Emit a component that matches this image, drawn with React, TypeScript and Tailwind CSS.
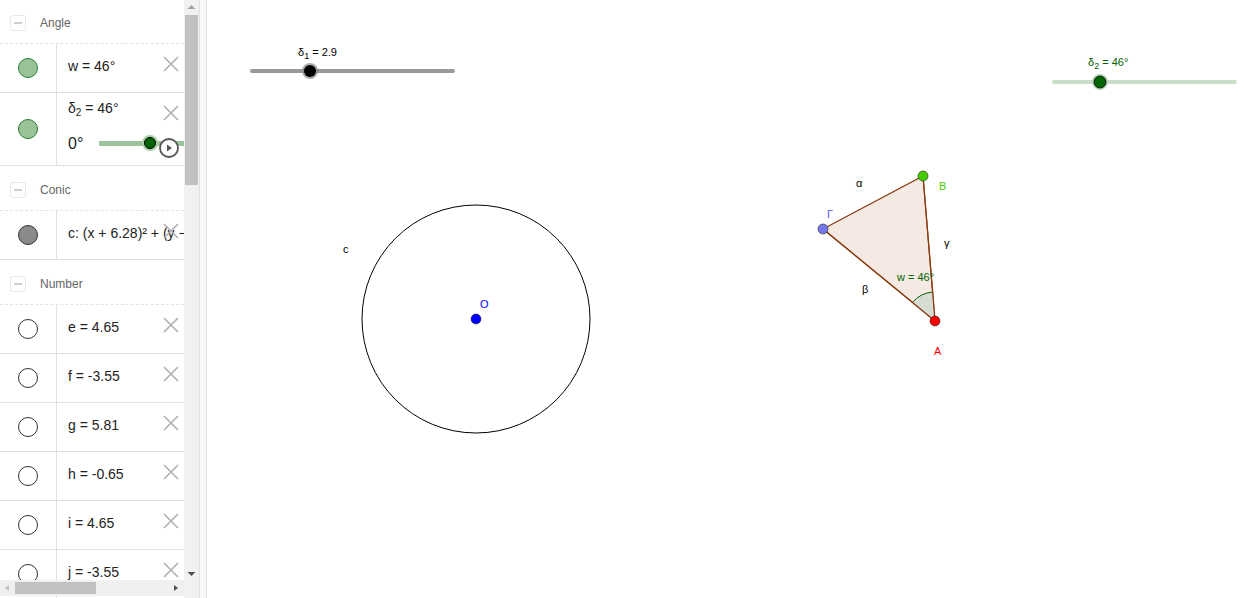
import React from "react";

const FONT = { fontFamily: '"Liberation Sans", Arial, sans-serif' };

function CloseX() {
  return (
    <svg className="absolute right-[4px] top-[11px]" width="18" height="18" viewBox="0 0 18 18">
      <path d="M2 2 L16 16 M16 2 L2 16" stroke="#b0b0b0" strokeWidth="1.6" fill="none" />
    </svg>
  );
}

function Header({ label, top }: { label: string; top?: boolean }) {
  return (
    <div className={`flex items-center border-b border-dashed border-[#e4e4e4] pt-[3px] ${top ? "h-[44px]" : "h-[45px]"}`}>
      <div className="ml-[10px] flex h-[16px] w-[16px] items-center justify-center rounded-[3px] border border-[#e8e8e8]">
        <div className="h-[2px] w-[8px] bg-[#cfcfcf]" />
      </div>
      <span className="ml-[14px] text-[12px] text-[#666]">{label}</span>
    </div>
  );
}

function Dot({ kind }: { kind: "green" | "gray" | "empty" }) {
  const cls =
    kind === "green"
      ? "bg-[#99c299] border-[#2e7d32]"
      : kind === "gray"
      ? "bg-[#8a8a8a] border-[#333]"
      : "bg-white border-[#333]";
  return <div className={`h-[20px] w-[20px] rounded-full border ${cls}`} />;
}

function Row({ dot, text, h = 49 }: { dot: "green" | "gray" | "empty"; text: React.ReactNode; h?: number }) {
  return (
    <div className="flex border-b border-[#e0e0e0]" style={{ height: h }}>
      <div className="flex w-[57px] shrink-0 items-center justify-center border-r border-[#e0e0e0]">
        <Dot kind={dot} />
      </div>
      <div className="relative flex flex-1 items-center overflow-hidden pb-[3px] pl-[11px] text-[14px] text-[#222] whitespace-nowrap">
        {text}
        <CloseX />
      </div>
    </div>
  );
}

function Panel() {
  return (
    <div className="relative h-full w-[184px] shrink-0 overflow-hidden bg-white" style={FONT}>
      <Header label="Angle" top />
      <Row dot="green" text={<span>w = 46°</span>} />
      <div className="flex h-[73px] border-b border-[#e0e0e0]">
        <div className="flex w-[57px] shrink-0 items-center justify-center border-r border-[#e0e0e0]">
          <Dot kind="green" />
        </div>
        <div className="relative flex-1 overflow-hidden text-[14px] text-[#222]">
          <div className="absolute left-[11px] top-[5px] whitespace-nowrap">
            δ<sub className="text-[10px]">2</sub> = 46°
          </div>
          <CloseX />
          <div className="absolute left-[11px] top-[39px] text-[16px]">0°</div>
          <div className="absolute left-[42px] top-[48px] h-[5px] w-[90px] bg-[#9cc49c]" />
          <div className="absolute left-[85px] top-[42px] h-[16px] w-[16px] rounded-full bg-[#a9cfa9]" />
          <div className="absolute left-[87px] top-[44px] h-[12px] w-[12px] rounded-full border border-black bg-[#006400]" />
          <svg className="absolute left-[101px] top-[44px]" width="22" height="22" viewBox="0 0 22 22">
            <circle cx="11" cy="11" r="9" fill="white" stroke="#555" strokeWidth="1.8" />
            <path d="M9 7.5 L14 11 L9 14.5 Z" fill="#555" />
          </svg>
        </div>
      </div>
      <Header label="Conic" />
      <Row dot="gray" text={<span>c: (x + 6.28)² + (y − 2.5)² = 10</span>} />
      <Header label="Number" />
      <Row dot="empty" text={<span>e = 4.65</span>} />
      <Row dot="empty" text={<span>f = -3.55</span>} />
      <Row dot="empty" text={<span>g = 5.81</span>} />
      <Row dot="empty" text={<span>h = -0.65</span>} />
      <Row dot="empty" text={<span>i = 4.65</span>} />
      <Row dot="empty" text={<span>j = -3.55</span>} />
      <div className="absolute bottom-[2px] left-0 flex h-[16px] w-[184px] items-center bg-[#f0f0f0]">
        <svg width="15" height="16" viewBox="0 0 15 16">
          <path d="M9 5 L5 8 L9 11 Z" fill="#c0c0c0" />
        </svg>
        <div className="h-[12px] w-[81px] bg-[#c1c1c1]" />
        <div className="flex-1" />
        <svg width="15" height="16" viewBox="0 0 15 16">
          <path d="M5 5 L9 8 L5 11 Z" fill="#505050" />
        </svg>
      </div>
    </div>
  );
}

function VScroll() {
  return (
    <div className="flex h-full w-[15px] shrink-0 flex-col bg-[#f1f1f1]">
      <svg width="15" height="15" viewBox="0 0 15 15">
        <path d="M3.5 9 L7.5 5 L11.5 9 Z" fill="#a3a3a3" />
      </svg>
      <div className="mx-[1px] h-[170px] bg-[#c1c1c1]" />
      <div className="flex-1" />
      <svg width="15" height="15" viewBox="0 0 15 15" className="mb-[17px]">
        <path d="M3.5 6 L7.5 10 L11.5 6 Z" fill="#505050" />
      </svg>
    </div>
  );
}

function Canvas() {
  return (
    <div className="relative h-full flex-1 bg-white">
      <svg className="absolute left-0 top-0" width="1051" height="598" style={FONT}>
        <g transform="translate(-207,0)">
          {/* slider δ1 */}
          <line x1="252" y1="71" x2="453" y2="71" stroke="#999" strokeWidth="4" strokeLinecap="round" />
          <circle cx="310" cy="71" r="8" fill="#888" opacity="0.7" />
          <circle cx="310" cy="71" r="6" fill="#000" />
          <text x="298" y="56" fontSize="11" fill="#000">
            δ<tspan fontSize="9" dy="3">1</tspan>
            <tspan dy="-3"> = 2.9</tspan>
          </text>
          {/* slider δ2 */}
          <line x1="1054" y1="82" x2="1235" y2="82" stroke="#c9dec9" strokeWidth="4" strokeLinecap="round" />
          <circle cx="1100" cy="82" r="8" fill="#bcd6bc" />
          <circle cx="1100" cy="82" r="6" fill="#006400" stroke="#000" strokeWidth="0.8" />
          <text x="1088" y="66" fontSize="11" fill="#006400">
            δ<tspan fontSize="9" dy="3">2</tspan>
            <tspan dy="-3"> = 46°</tspan>
          </text>
          {/* circle */}
          <circle cx="476" cy="319" r="114" fill="none" stroke="#000" strokeWidth="1" />
          <text x="343" y="253" fontSize="11" fill="#000">c</text>
          <circle cx="476" cy="319" r="5" fill="#0000ff" stroke="#222" strokeWidth="0.6" />
          <text x="480" y="308" fontSize="11" fill="#0000ff">O</text>
          {/* triangle */}
          <polygon points="823,229 923,176 935,321" fill="#f4e9e3" stroke="#8b3a0f" strokeWidth="1.2" />
          <path d="M935 321 L912.4 302.5 A29 29 0 0 1 932.6 292.1 Z" fill="#d7dcd3" stroke="none" />
          <path d="M912.4 302.5 A29 29 0 0 1 932.6 292.1" fill="none" stroke="#006400" strokeWidth="1" />
          <line x1="923" y1="176" x2="935" y2="321" stroke="#8b3a0f" strokeWidth="1.2" />
          <line x1="823" y1="229" x2="935" y2="321" stroke="#8b3a0f" strokeWidth="1.2" />
          <circle cx="923" cy="176" r="5" fill="#44cc00" stroke="#222" strokeWidth="0.6" />
          <circle cx="823" cy="229" r="5" fill="#7777ee" stroke="#222" strokeWidth="0.6" />
          <circle cx="935" cy="321" r="5" fill="#ff0000" stroke="#222" strokeWidth="0.6" />
          <text x="897" y="281" fontSize="11" fill="#006400">w = 46°</text>
          <text x="856" y="187" fontSize="11" fill="#000">α</text>
          <text x="939" y="190" fontSize="11" fill="#44cc00">B</text>
          <text x="827" y="218" fontSize="11" fill="#5555ff">Γ</text>
          <text x="944" y="247" fontSize="11" fill="#000">γ</text>
          <text x="862" y="293" fontSize="11" fill="#000">β</text>
          <text x="934" y="355" fontSize="11" fill="#ff0000">A</text>
        </g>
      </svg>
    </div>
  );
}

export default function App() {
  return (
    <div className="flex h-[598px] w-[1258px] overflow-hidden bg-white">
      <Panel />
      <VScroll />
      <div className="h-full w-[8px] shrink-0 border-x border-[#e0e0e0] bg-[#f8f8f8]" />
      <Canvas />
    </div>
  );
}
